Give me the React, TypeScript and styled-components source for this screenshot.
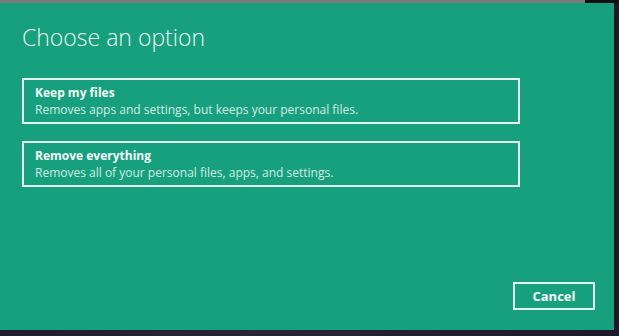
import React from 'react'
import styled, { createGlobalStyle } from 'styled-components'

const GlobalStyle = createGlobalStyle`
  html, body {
    margin: 0;
    padding: 0;
    width: 619px;
    height: 336px;
    overflow: hidden;
    background: #1d1a2a;
  }
`

const Screen = styled.div`
  width: 619px;
  height: 336px;
  display: flex;
  flex-direction: column;
`

const TopStrip = styled.div`
  height: 3px;
  flex-shrink: 0;
  display: flex;
`

const StripGray = styled.div`
  flex: 1;
  background: #7a7a78;
`

const StripDark = styled.div`
  width: 34px;
  background: #101010;
`

const Middle = styled.div`
  display: flex;
  height: 327px;
`

const Panel = styled.div`
  width: 614px;
  background: #17a07e;
  padding: 19px 0 0 22px;
  box-sizing: border-box;
  display: flex;
  flex-direction: column;
  font-family: 'Open Sans', 'Noto Sans', sans-serif;
  color: #ffffff;
`

const SideEdge = styled.div`
  flex: 1;
  background: #1a1a24;
`

const Title = styled.h1`
  margin: 0;
  font-size: 23px;
  font-weight: 300;
  line-height: 30px;
  color: #e8f6f1;
`

const Options = styled.div`
  margin-top: 26px;
  display: flex;
  flex-direction: column;
  gap: 17px;
  width: 498px;
`

const OptionBox = styled.button`
  all: unset;
  box-sizing: border-box;
  height: 46px;
  border: 2px solid #e3f3ed;
  padding: 5px 0 0 11px;
  display: flex;
  flex-direction: column;
  cursor: pointer;
`

const OptionTitle = styled.div`
  font-size: 12px;
  font-weight: 700;
  line-height: 16px;
  color: #f4fbf8;
`

const OptionText = styled.div`
  font-size: 12px;
  font-weight: 400;
  line-height: 17px;
  color: #d4ece4;
`

const Footer = styled.div`
  margin-top: auto;
  display: flex;
  justify-content: flex-end;
  padding: 0 19px 20px 0;
`

const CancelButton = styled.button`
  all: unset;
  box-sizing: border-box;
  width: 82px;
  height: 28px;
  border: 2px solid #e3f3ed;
  display: flex;
  align-items: center;
  justify-content: center;
  font-size: 13px;
  font-weight: 700;
  color: #f4fbf8;
  cursor: pointer;
`

const BottomStrip = styled.div`
  flex: 1;
  background: linear-gradient(90deg, #221c30, #2a2438 40%, #1c1a2c);
`

const options = [
  { title: 'Keep my files', text: 'Removes apps and settings, but keeps your personal files.' },
  { title: 'Remove everything', text: 'Removes all of your personal files, apps, and settings.' },
]

const App: React.FC = () => {
  return (
    <Screen>
      <GlobalStyle />
      <TopStrip>
        <StripGray />
        <StripDark />
      </TopStrip>
      <Middle>
        <Panel>
          <Title>Choose an option</Title>
          <Options>
            {options.map((o) => (
              <OptionBox key={o.title}>
                <OptionTitle>{o.title}</OptionTitle>
                <OptionText>{o.text}</OptionText>
              </OptionBox>
            ))}
          </Options>
          <Footer>
            <CancelButton>Cancel</CancelButton>
          </Footer>
        </Panel>
        <SideEdge />
      </Middle>
      <BottomStrip />
    </Screen>
  )
}

export default App
